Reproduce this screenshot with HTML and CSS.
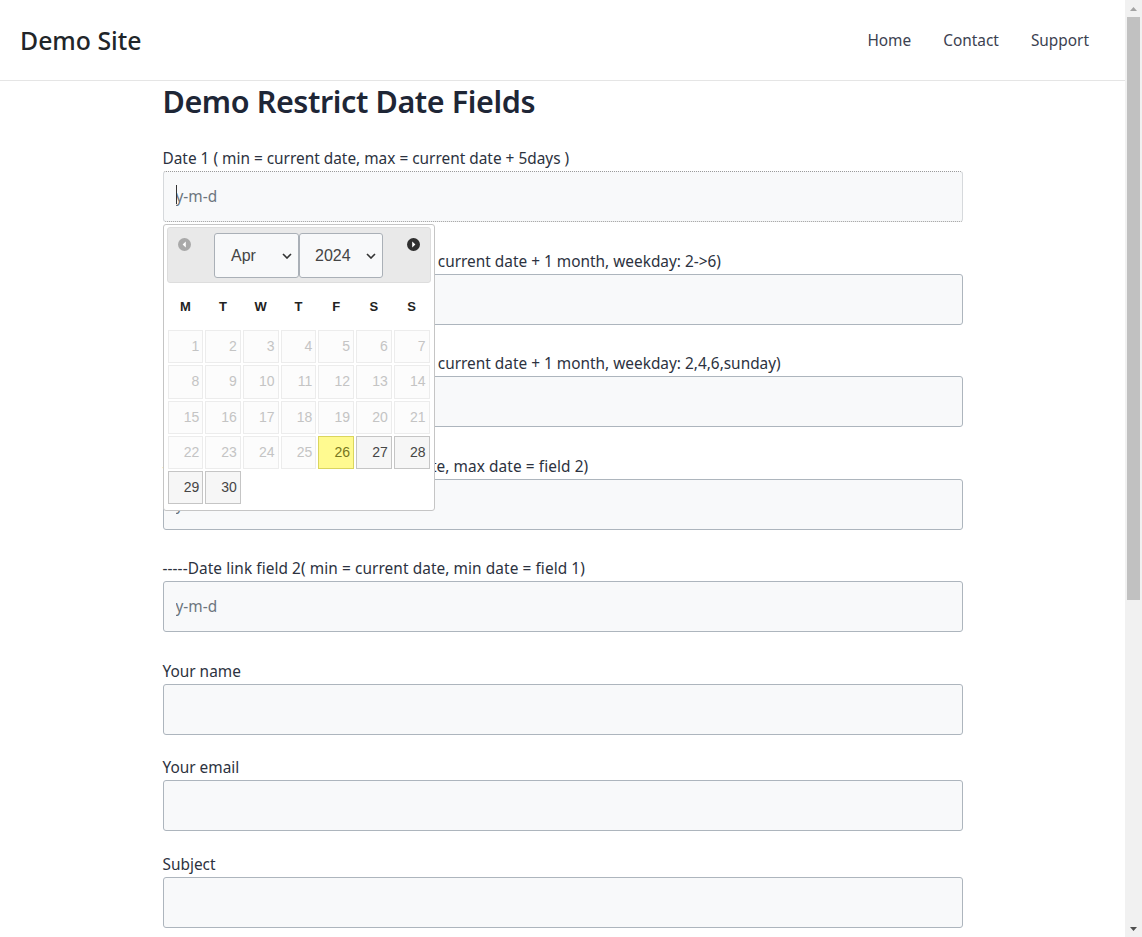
FILE: index.html
```html
<!DOCTYPE html>
<html lang="en">
<head>
<meta charset="utf-8">
<title>Demo Restrict Date Fields</title>
<link rel="stylesheet" href="styles.css">
</head>
<body>
<div class="window">
  <div class="page">
    <header class="navbar">
      <a class="brand" href="#">Demo Site</a>
      <nav class="nav">
        <a href="#">Home</a>
        <a href="#">Contact</a>
        <a href="#">Support</a>
      </nav>
    </header>
    <main class="container">
      <h1 class="title">Demo Restrict Date Fields</h1>
      <form class="form">
        <div class="group date-group has-picker">
          <label class="label">Date 1 ( min = current date, max = current date + 5days )</label>
          <input class="field focused" type="text" placeholder="y-m-d">
          <span class="caret"></span>
          <div class="datepicker">
            <div class="dp-header">
              <span class="dp-nav dp-prev"><svg width="13" height="13" viewBox="0 0 13 13"><circle cx="6.5" cy="6.5" r="6.5" fill="#a9a9a9"/><path d="M7.8 3.6 L4.6 6.5 L7.8 9.4 Z" fill="#fff"/></svg></span>
              <div class="dp-selects">
                <span class="select month"><span class="select-text">Apr</span><svg class="chev" width="10" height="6" viewBox="0 0 10 6"><path d="M1 1 L5 5 L9 1" fill="none" stroke="#333" stroke-width="1.6"/></svg></span>
                <span class="select year"><span class="select-text">2024</span><svg class="chev" width="10" height="6" viewBox="0 0 10 6"><path d="M1 1 L5 5 L9 1" fill="none" stroke="#333" stroke-width="1.6"/></svg></span>
              </div>
              <span class="dp-nav dp-next"><svg width="13" height="13" viewBox="0 0 13 13"><circle cx="6.5" cy="6.5" r="6.5" fill="#2f2f2f"/><path d="M5.2 3.6 L8.4 6.5 L5.2 9.4 Z" fill="#fff"/></svg></span>
            </div>
            <table class="dp-cal">
              <thead><tr><th>M</th><th>T</th><th>W</th><th>T</th><th>F</th><th>S</th><th>S</th></tr></thead>
              <tbody>
                <tr><td><span class="d off">1</span></td><td><span class="d off">2</span></td><td><span class="d off">3</span></td><td><span class="d off">4</span></td><td><span class="d off">5</span></td><td><span class="d off">6</span></td><td><span class="d off">7</span></td></tr>
                <tr><td><span class="d off">8</span></td><td><span class="d off">9</span></td><td><span class="d off">10</span></td><td><span class="d off">11</span></td><td><span class="d off">12</span></td><td><span class="d off">13</span></td><td><span class="d off">14</span></td></tr>
                <tr><td><span class="d off">15</span></td><td><span class="d off">16</span></td><td><span class="d off">17</span></td><td><span class="d off">18</span></td><td><span class="d off">19</span></td><td><span class="d off">20</span></td><td><span class="d off">21</span></td></tr>
                <tr><td><span class="d off">22</span></td><td><span class="d off">23</span></td><td><span class="d off">24</span></td><td><span class="d off">25</span></td><td><span class="d today">26</span></td><td><span class="d">27</span></td><td><span class="d">28</span></td></tr>
                <tr><td><span class="d">29</span></td><td><span class="d">30</span></td><td></td><td></td><td></td><td></td><td></td></tr>
              </tbody>
            </table>
          </div>
        </div>
        <div class="group date-group">
          <label class="label">Date 2 ( min = current date + 1, max = current date + 1 month, weekday: 2-&gt;6)</label>
          <input class="field" type="text" placeholder="y-m-d">
        </div>
        <div class="group date-group">
          <label class="label">Date 3 ( min = current date + 1, max = current date + 1 month, weekday: 2,4,6,sunday)</label>
          <input class="field" type="text" placeholder="y-m-d">
        </div>
        <div class="group date-group">
          <label class="label wide">-----Date link field 1( min = current date, max date = field 2)</label>
          <input class="field" type="text" placeholder="y-m-d">
        </div>
        <div class="group date-group">
          <label class="label wide">-----Date link field 2( min = current date, min date = field 1)</label>
          <input class="field" type="text" placeholder="y-m-d">
        </div>
        <div class="group">
          <label class="label">Your name</label>
          <input class="field" type="text">
        </div>
        <div class="group">
          <label class="label">Your email</label>
          <input class="field" type="text">
        </div>
        <div class="group">
          <label class="label">Subject</label>
          <input class="field" type="text">
        </div>
        <div class="group">
          <label class="label">Your message</label>
          <textarea class="field area"></textarea>
        </div>
      </form>
    </main>
  </div>
  <div class="scrollbar">
    <div class="sb-btn"><svg width="7" height="4" viewBox="0 0 7 4"><path d="M0 4 L3.5 0 L7 4 Z" fill="#a3a3a3"/></svg></div>
    <div class="sb-track"><div class="sb-thumb"></div></div>
    <div class="sb-btn"><svg width="7" height="4" viewBox="0 0 7 4"><path d="M0 0 L3.5 4 L7 0 Z" fill="#505050"/></svg></div>
  </div>
</div>
</body>
</html>
```
FILE: styles.css
```css
html, body {
  margin: 0;
  height: 100%;
  overflow: hidden;
}
body {
  font-family: "Noto Sans", "Open Sans", sans-serif;
  font-size: 15.4px;
  color: #212529;
  background: #fff;
}
.window {
  display: flex;
  height: 100%;
}
.page {
  flex: 1;
  overflow: hidden;
  min-width: 0;
}
.navbar {
  height: 80px;
  border-bottom: 1px solid #e5e5e5;
  display: flex;
  align-items: center;
  justify-content: space-between;
  padding: 0 20px;
}
.brand {
  font-size: 24.8px;
  font-weight: 500;
  color: #212529;
  text-decoration: none;
}
.nav {
  display: flex;
}
.nav a {
  padding: 0 16px;
  color: #3b4150;
  text-decoration: none;
  font-size: 15.4px;
}
.nav a:first-child {
  padding-left: 19px;
}
.container {
  max-width: 800px;
  margin: 0 auto;
  position: relative;
}
.title {
  margin: 0 0 26px;
  font-size: 30.5px;
  font-weight: 600;
  letter-spacing: -0.4px;
  line-height: 40px;
  color: #1e2636;
}
.form {
  display: flex;
  flex-direction: column;
}
.group {
  display: flex;
  flex-direction: column;
  margin-bottom: 21.5px;
}
.date-group {
  margin-bottom: 27.6px;
}
.has-picker {
  position: relative;
}
.label {
  display: block;
  line-height: 24px;
  color: #2c3240;
}
.label.wide {
  letter-spacing: 0.08px;
}
.field {
  box-sizing: border-box;
  height: 51px;
  border: 1px solid #adb5bd;
  border-radius: 3px;
  background: #f8f9fa;
  padding: 0 12px;
  font: inherit;
  font-size: 15.4px;
  color: #333;
  margin: 0;
}
.field::placeholder {
  color: #6c757d;
}
.field.focused {
  border-top: 1px dotted #9a9a9a;
  border-bottom: 1px dotted #9a9a9a;
  border-left: 1px solid #d6d9dc;
  border-right: 1px solid #d6d9dc;
  outline: none;
}
.caret {
  position: absolute;
  left: 13px;
  top: 38px;
  width: 1px;
  height: 19px;
  background: #333;
}
.area {
  height: 120px;
}

/* datepicker */
.datepicker {
  position: absolute;
  top: calc(100% + 2px);
  left: 0;
  width: 272px;
  box-sizing: border-box;
  background: #fff;
  border: 1px solid #c5c5c5;
  border-radius: 3px;
  padding: 2px 3px 5px;
  font-family: "Liberation Sans", Arial, sans-serif;
  z-index: 5;
}
.dp-header {
  height: 56px;
  box-sizing: border-box;
  background: #e9e9e9;
  border: 1px solid #dddddd;
  border-radius: 3px;
  display: flex;
  align-items: flex-start;
  justify-content: space-between;
  padding: 10px 10px 0;
}
.dp-nav {
  display: flex;
  width: 13px;
  height: 13px;
}
.dp-prev { margin-left: 0; }
.dp-next { margin-right: 0; }
.dp-selects {
  display: flex;
  gap: 0;
  margin-top: -5px;
  margin-left: 0;
}
.select {
  position: relative;
  box-sizing: border-box;
  height: 45px;
  border: 1px solid #aab0b7;
  border-radius: 3px;
  background: #f8f9fa;
  display: flex;
  align-items: center;
  font-size: 16px;
  color: #444;
}
.select.month { width: 85px; }
.select.year { width: 84px; }
.select-text {
  padding-left: 16px;
}
.select.year .select-text { padding-left: 15px; }
.chev {
  position: absolute;
  right: 6px;
  top: 19px;
}
.dp-cal {
  width: 100%;
  border-collapse: collapse;
  font-size: 14px;
  margin: 0;
}
.dp-cal th {
  height: 46px;
  padding: 0;
  font-weight: bold;
  font-size: 13px;
  color: #222;
  text-align: center;
  vertical-align: middle;
}
.dp-cal td {
  padding: 1px;
}
.d {
  display: block;
  box-sizing: border-box;
  height: 33.3px;
  line-height: 31px;
  border: 1px solid #c5c5c5;
  background: #f6f6f6;
  color: #454545;
  text-align: right;
  padding-right: 3px;
}
.d.off {
  border-color: #ececec;
  background: #fcfcfc;
  color: #c4c4c4;
}
.d.today {
  background: #fffa90;
  border-color: #dad55e;
  color: #777620;
}

/* scrollbar */
.scrollbar {
  width: 17px;
  flex: none;
  background: #f1f1f1;
  display: flex;
  flex-direction: column;
}
.sb-btn {
  height: 17px;
  display: flex;
  align-items: center;
  justify-content: center;
}
.sb-track {
  flex: 1;
  display: flex;
  flex-direction: column;
}
.sb-thumb {
  height: 583px;
  margin: 0 2px;
  background: #c1c1c1;
}
```
